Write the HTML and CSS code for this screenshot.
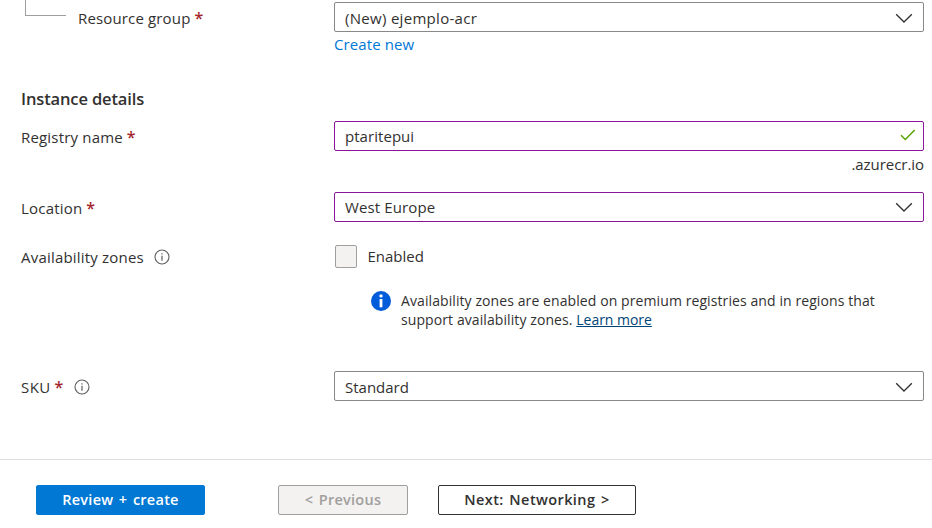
FILE: index.html
```html
<!DOCTYPE html>
<html lang="en">
<head>
<meta charset="utf-8">
<title>Create container registry</title>
<link rel="stylesheet" href="styles.css">
</head>
<body>
<svg class="defs" width="0" height="0" aria-hidden="true">
  <symbol id="chevron" viewBox="0 0 18 11"><path d="M1.200 1.200 9 9l7.800-7.800" fill="none" stroke="#323130" stroke-width="1.300"/></symbol>
  <symbol id="info" viewBox="0 0 16 16"><circle cx="8" cy="8" r="7" fill="none" stroke="#605e5c" stroke-width="1.100"/><path d="M8 6.700v5M8 4.200v1.300" stroke="#605e5c" stroke-width="1.200"/></symbol>
</svg>
<main class="form">
  <div class="row row-group">
    <div class="label label-child"><span class="branch"></span><span class="t-group">Resource group</span><span class="req">*</span></div>
    <div class="control">
      <div class="field low"><span class="t-acr">(New) ejemplo-acr</span><svg class="chevron"><use href="#chevron"/></svg></div>
      <a class="create">Create new</a>
    </div>
  </div>
  <h2 class="heading">Instance details</h2>
  <div class="row row-name">
    <div class="label"><span class="t-reg">Registry name</span><span class="req">*</span></div>
    <div class="control">
      <div class="field edited"><span class="t-name">ptaritepui</span><svg class="check" viewBox="0 0 16 12"><path d="M1 6.200 5.300 10.500 14.700 1" fill="none" stroke="#57a300" stroke-width="1.500"/></svg></div>
      <div class="suffix">.azurecr.io</div>
    </div>
  </div>
  <div class="row row-location">
    <div class="label"><span class="t-loc">Location</span><span class="req">*</span></div>
    <div class="field edited"><span class="t-west">West Europe</span><svg class="chevron"><use href="#chevron"/></svg></div>
  </div>
  <div class="row row-zones">
    <div class="label"><span class="t-av">Availability zones</span><svg class="info"><use href="#info"/></svg></div>
    <div class="control">
      <div class="option"><span class="checkbox"></span><span>Enabled</span></div>
      <div class="note">
        <svg class="badge" viewBox="0 0 20 20"><circle cx="10" cy="10" r="10" fill="#015cda"/><circle cx="10" cy="4.900" r="1.700" fill="#fff"/><path d="M10 8v8.300" stroke="#fff" stroke-width="2.800"/></svg>
        <p>Availability zones are enabled on premium registries and in regions that<br>support availability zones. <a class="learn">Learn more</a></p>
      </div>
    </div>
  </div>
  <div class="row row-sku">
    <div class="label"><span class="t-sku">SKU</span><span class="req">*</span><svg class="info"><use href="#info"/></svg></div>
    <div class="field low"><span>Standard</span><svg class="chevron"><use href="#chevron"/></svg></div>
  </div>
</main>
<footer class="footer">
  <button class="btn primary">Review + create</button>
  <button class="btn previous" disabled>&lt; Previous</button>
  <button class="btn next">Next: Networking &gt;</button>
</footer>
</body>
</html>
```
FILE: styles.css
```css
* { box-sizing: border-box; }
body { margin: 0; width: 932px; height: 528px; overflow: hidden; background: #fff; color: #323130; font: 15px/20px "Open Sans", "Noto Sans", sans-serif; }
.defs { display: block; }
.form { height: 459px; }
.row { display: grid; grid-template-columns: 313px 590px; padding-left: 21px; align-items: start; }
.label { display: flex; align-items: center; height: 30px; padding-top: 2px; white-space: pre; }
.req { color: #a4262c; font-size: 16px; font-weight: 600; margin-left: 4px; }
.field { display: flex; align-items: center; justify-content: space-between; height: 30px; padding: 0 10px; border: 1px solid #8a8886; border-radius: 2px; }
.low { padding-top: 2px; }
.edited { border-color: #881798; }
.chevron { width: 18px; height: 11px; }
.check { width: 16px; height: 12px; margin: -2px -3px 0 0; }
.info { width: 16px; height: 16px; margin-left: 10.5px; }
.t-group { letter-spacing: 0.15px; }
.t-acr { letter-spacing: 0.3px; }
.t-reg { letter-spacing: 0.18px; }
.t-loc { letter-spacing: 0.2px; }
.t-sku { letter-spacing: 0.4px; }
.t-name { letter-spacing: 0.05px; }
.t-west { letter-spacing: 0.12px; }
.t-av { letter-spacing: 0.2px; }
.row-group { padding-top: 2px; height: 84px; }
.branch { width: 41px; height: 17px; margin: -21px 12px 0 4px; border: solid #a19f9d; border-width: 0 0 1px 1px; }
.create { display: block; margin-top: 2px; color: #0078d4; letter-spacing: 0.1px; }
.heading { margin: 4px 0 12px; padding-left: 21px; font-size: 16.5px; line-height: 21px; font-weight: 600; letter-spacing: -0.13px; }
.row-name { height: 71px; }
.suffix { margin-top: 3px; text-align: right; letter-spacing: -0.05px; }
.row-location { height: 49px; }
.row-zones { height: 130px; }
.option { display: flex; align-items: center; gap: 10.5px; height: 30px; padding-left: 1px; }
.checkbox { width: 22px; height: 23px; background: #f3f2f1; border: 1px solid #a19f9d; border-radius: 2px; }
.note { display: flex; gap: 10px; margin: 20px 0 0 37px; font-size: 14px; line-height: 19px; letter-spacing: 0.09px; }
.note p { margin: 0; white-space: nowrap; }
.badge { width: 20px; height: 20px; }
.learn { color: #004578; text-decoration: underline; letter-spacing: -0.03px; }
.footer { display: flex; align-items: flex-start; height: 69px; border-top: 1px solid #e1dfdd; padding: 25px 0 0 36px; }
.btn { height: 30px; padding: 0; border: 1px solid #323130; border-radius: 2px; background: #fff; color: #323130; font: 600 14.5px/20px "Open Sans", sans-serif; letter-spacing: 0.25px; word-spacing: 1.5px; white-space: nowrap; }
.primary { width: 169px; border-color: #0078d4; background: #0078d4; color: #fff; }
.previous { width: 130px; margin-left: 73px; border-color: #a19f9d; background: #f3f2f1; color: #a19f9d; }
.next { width: 198px; margin-left: 30px; letter-spacing: 0.4px; }
```
